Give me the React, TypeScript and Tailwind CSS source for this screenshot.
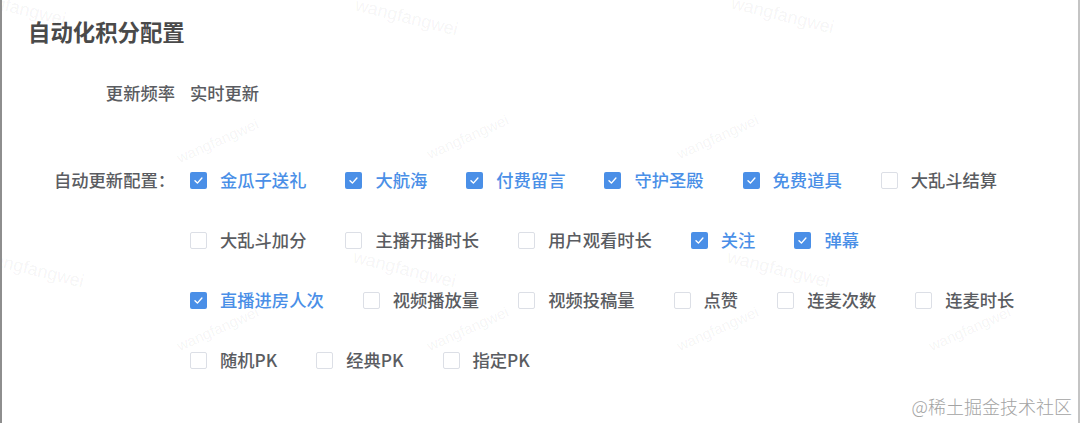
import React from "react";

type Item = { label: string; checked: boolean };

const rows: Item[][] = [
  [
    { label: "金瓜子送礼", checked: true },
    { label: "大航海", checked: true },
    { label: "付费留言", checked: true },
    { label: "守护圣殿", checked: true },
    { label: "免费道具", checked: true },
    { label: "大乱斗结算", checked: false },
  ],
  [
    { label: "大乱斗加分", checked: false },
    { label: "主播开播时长", checked: false },
    { label: "用户观看时长", checked: false },
    { label: "关注", checked: true },
    { label: "弹幕", checked: true },
  ],
  [
    { label: "直播进房人次", checked: true },
    { label: "视频播放量", checked: false },
    { label: "视频投稿量", checked: false },
    { label: "点赞", checked: false },
    { label: "连麦次数", checked: false },
    { label: "连麦时长", checked: false },
  ],
  [
    { label: "随机PK", checked: false },
    { label: "经典PK", checked: false },
    { label: "指定PK", checked: false },
  ],
];

const marks: { x: number; y: number; down: boolean }[] = [
  { x: -40, y: -6, down: true },
  { x: 352, y: 4, down: true },
  { x: 728, y: 2, down: true },
  { x: 172, y: 130, down: false },
  { x: 422, y: 126, down: false },
  { x: 672, y: 126, down: false },
  { x: -22, y: 256, down: true },
  { x: 350, y: 256, down: true },
  { x: 724, y: 256, down: true },
  { x: 172, y: 318, down: false },
  { x: 422, y: 318, down: false },
  { x: 672, y: 318, down: false },
  { x: 924, y: 318, down: false },
];

function Box({ checked }: { checked: boolean }) {
  return checked ? (
    <span className="flex h-[17px] w-[17px] shrink-0 items-center justify-center rounded-[2px] bg-[#4a8fe7]">
      <svg width="17" height="17" viewBox="0 0 17 17">
        <polyline
          points="5,8.8 7.4,11.1 11.9,6"
          fill="none"
          stroke="#ffffff"
          strokeWidth="1.4"
          strokeLinecap="round"
          strokeLinejoin="round"
        />
      </svg>
    </span>
  ) : (
    <span className="block h-[17px] w-[17px] shrink-0 rounded-[2px] border border-[#dcdfe6] bg-white" />
  );
}

export default function App() {
  return (
    <div
      className="relative h-[423px] w-[1080px] overflow-hidden border-l-2 border-r-2 border-l-[#8e8e8e] border-r-[#c4c4c4] bg-white"
      style={{ fontFamily: '"Noto Sans CJK SC", "Noto Sans", sans-serif' }}
    >
      <div className="pl-[26px] pt-[16px]">
        <div className="text-[22.4px] font-bold leading-[30px] text-[#4a4a4a]">自动化积分配置</div>

        <div className="mt-[35px] flex items-center text-[17.3px] font-medium leading-[24px] text-[#5a5c61]">
          <div className="w-[147px] text-right">更新频率</div>
          <div className="ml-[15px]">实时更新</div>
        </div>

        <div className="mt-[63px] flex text-[17.3px] font-medium leading-[24px]">
          <div className="w-[147px] text-right text-[#5a5c61]">自动更新配置：</div>
          <div className="ml-[15px] flex flex-col gap-[36px]">
            {rows.map((row, i) => (
              <div key={i} className="flex items-center">
                {row.map((it) => (
                  <label key={it.label} className="mr-[39px] flex items-center">
                    <Box checked={it.checked} />
                    <span
                      className={
                        "ml-[13px] whitespace-nowrap " +
                        (it.checked ? "text-[#4a8fe7]" : "text-[#5a5c61]")
                      }
                    >
                      {it.label}
                    </span>
                  </label>
                ))}
              </div>
            ))}
          </div>
        </div>
      </div>

      {marks.map((m, i) => (
        <div
          key={i}
          className={
            "pointer-events-none absolute whitespace-nowrap text-[#000000]/[0.055] " +
            (m.down ? "rotate-[14deg] text-[18px]" : "-rotate-[24deg] text-[15px]")
          }
          style={{ left: m.x, top: m.y, fontFamily: '"Liberation Sans", Arial, sans-serif' }}
        >
          wangfangwei
        </div>
      ))}

      <div className="pointer-events-none absolute bottom-[5px] right-[6px] text-[18px] font-light leading-[24px] text-[#a3a3a3]">
        @稀土掘金技术社区
      </div>
    </div>
  );
}
